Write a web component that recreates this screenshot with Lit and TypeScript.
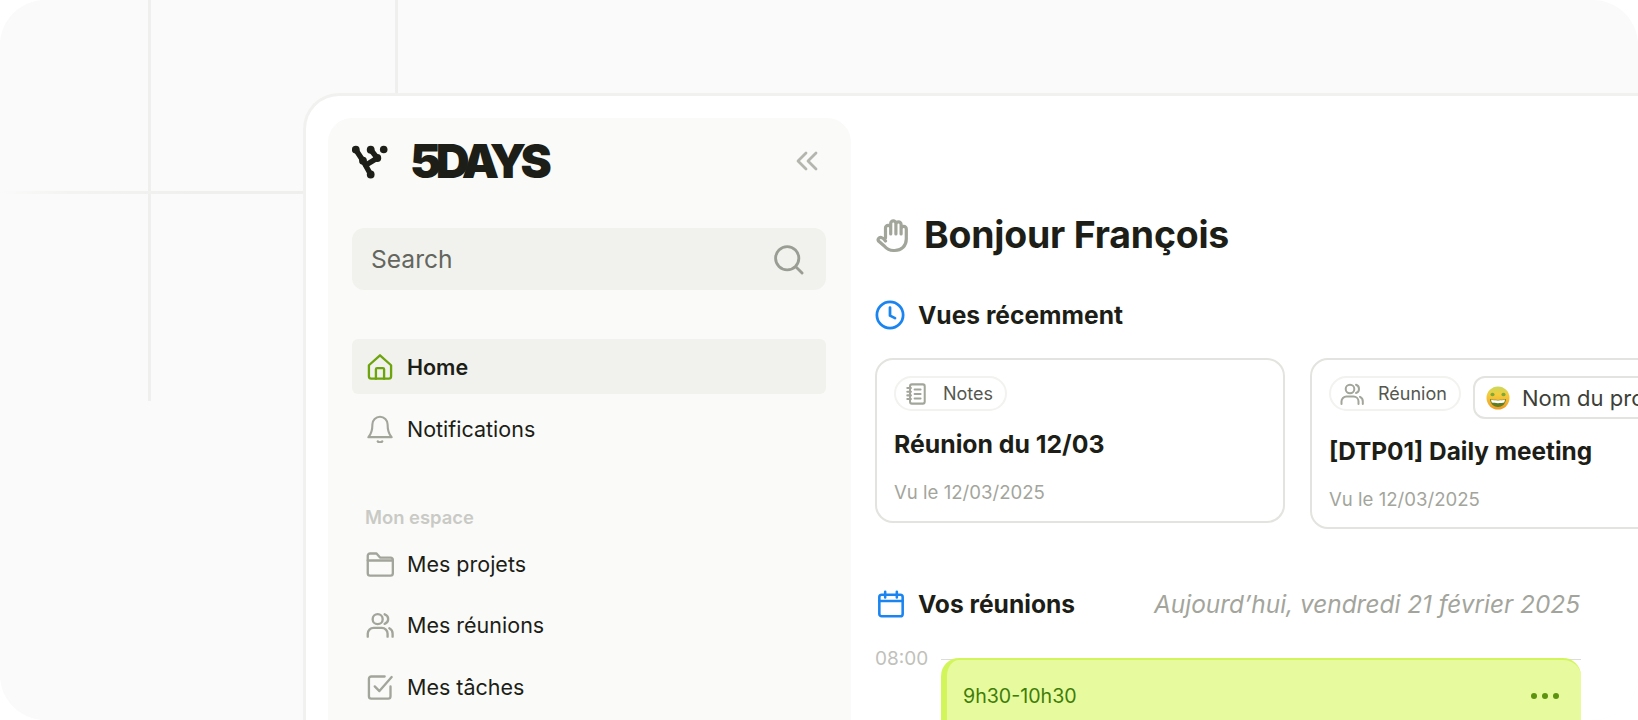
import { LitElement, html, css, svg } from 'lit';
import { customElement } from 'lit/decorators.js';

const icon = (size: number, body: unknown, vb = 24, weight = 2) => html`
  <svg width=${size} height=${size} viewBox="0 0 ${vb} ${vb}" fill="none" stroke="currentColor"
    stroke-width=${weight} stroke-linecap="round" stroke-linejoin="round" aria-hidden="true">${body}</svg>`;

const HOME = svg`<path d="M2.500 10.500 12 2l9.500 8.500V20a2 2 0 0 1-2 2h-15a2 2 0 0 1-2-2z"/><path d="M8.500 22v-8a1 1 0 0 1 1-1h5a1 1 0 0 1 1 1v8"/>`;
const BELL = svg`<path d="M12 1.500a6.500 6.500 0 0 0-6.500 6.500c0 5.500-1.500 9-3.500 11h20c-2-2-3.500-5.500-3.500-11A6.500 6.500 0 0 0 12 1.500z"/><path d="M10 22.500a2.500 2.500 0 0 0 4 0"/>`;
const FOLDER = svg`<path d="M1.500 6V5a2 2 0 0 1 2-2h5.500l3 3.500h9a2 2 0 0 1 2 2V20a2 2 0 0 1-2 2h-17.500a2 2 0 0 1-2-2z"/><path d="M1.500 9h21"/>`;
const PEOPLE = svg`<circle cx="10" cy="7" r="4.300"/><path d="M1.500 22v-2.500a5 5 0 0 1 5-5h7a5 5 0 0 1 5 5V22"/><path d="M16 2.800a4.300 4.300 0 0 1 0 8.200"/><path d="M20 14.800a5 5 0 0 1 2.800 4.700V22"/>`;
const TASK = svg`<path d="M21 11.500V20a2 2 0 0 1-2 2H4.500a2 2 0 0 1-2-2V5a2 2 0 0 1 2-2H16"/><path d="m7.500 11.500 4 4L22 3.500"/>`;
const NOTEBOOK = svg`<rect x="5.500" y="1.500" width="16" height="21" rx="2"/><path d="M2.500 5.500h4M2.500 9.500h4M2.500 13.500h4M2.500 17.500h4M10.500 7h6.500M10.500 12h6.500M10.500 17h6.500"/>`;
const HAND = svg`<path d="M9.500 20V10a2.600 2.600 0 0 1 5.200 0v6V5.500a2.600 2.600 0 0 1 5.200 0V16V6.500a2.600 2.600 0 0 1 5.200 0V16v-5a2.600 2.600 0 0 1 5.200 0v10c0 7-5 11.500-11.500 11.500h-1.500c-4 0-6.500-1.500-9-4.500L2.500 23c-1.200-1.800.5-4 2.800-3.500 1.500.3 2.700 1.500 4.200 3.500"/>`;

// beaded chains of the 5DAYS mark
const LOGO = svg`<g stroke="#1c1e17" stroke-linecap="round" fill="none" stroke-width="5.400">
    <path d="M3.800 5.700 11 16.700 18.700 30.500"/>
    <path d="M18.700 5.700 25.300 14 14 21"/>
  </g>
  <g fill="#1c1e17">
    <circle cx="3.800" cy="5.700" r="3.900"/>
    <circle cx="11" cy="16.700" r="3.900"/>
    <circle cx="18.700" cy="30.500" r="3.900"/>
    <circle cx="18.700" cy="5.700" r="3.900"/>
    <circle cx="25.300" cy="14" r="3.900"/>
    <circle cx="31.700" cy="5.500" r="3.800"/>
  </g>`;

const EMOJI = svg`<defs><linearGradient id="face" x1="0" y1="0" x2="0" y2="1"><stop offset="0" stop-color="#c9d95a"/><stop offset=".35" stop-color="#f5cc3c"/><stop offset="1" stop-color="#ee9b25"/></linearGradient></defs>
  <circle cx="12" cy="12" r="11.500" fill="url(#face)"/>
  <path d="M4.500 8c1-1.600 3-1.600 4 0 .5 1-.5 2-2 2.300-1.500-.3-2.500-1.300-2-2.300zM15.500 8c1-1.600 3-1.600 4 0 .5 1-.5 2-2 2.300-1.500-.3-2.500-1.300-2-2.300z" fill="#7aa83a"/>
  <path d="M4 13c3 1.200 13 1.200 16 0-.3 5-4 8-8 8s-7.700-3-8-8z" fill="#5f7d22"/>
  <path d="M5 13.800c3 .8 11 .8 14 0l-.7 2.800c-3 .8-9.600.8-12.600 0z" fill="#fff"/>`;

@customElement('app-root')
export class AppRoot extends LitElement {
  static override styles = css`
    :host {
      display: block;
      width: 1638px;
      height: 720px;
      background: #fff;
      font-family: Inter, 'Liberation Sans', sans-serif;
      color: #1c1e17;
    }
    .stage {
      position: relative;
      width: 1638px;
      height: 720px;
      box-sizing: border-box;
      padding: 93px 0 0 303px;
      background: #fafafa;
      border-radius: 45px;
      overflow: hidden;
    }
    .grid-line { position: absolute; background: #efefed; }
    .v1 { left: 148px; top: 0; width: 3px; height: 401px; }
    .v2 { left: 395px; top: 0; width: 3px; height: 94px; }
    .h1 {
      left: 0;
      top: 191px;
      width: 304px;
      height: 3px;
      background: linear-gradient(90deg, #fafafa 0, #f3f3f1 70px, #efefed 200px);
    }
    .window {
      position: relative;
      display: flex;
      gap: 24px;
      box-sizing: border-box;
      height: 640px;
      padding: 22px 0 0 22px;
      background: #fff;
      border: 3px solid #f1f1ef;
      border-right: 0;
      border-top-left-radius: 36px;
    }
    .side {
      flex: 0 0 523px;
      box-sizing: border-box;
      padding: 0 25px 0 24px;
      background: #fafaf8;
      border-radius: 24px 24px 0 0;
    }
    .brand { display: flex; align-items: center; height: 83px; padding-top: 1px; box-sizing: border-box; }
    .mark { flex: none; width: 38px; height: 36px; margin: 3px 20px 0 0; }
    .wordmark {
      font-size: 47px;
      line-height: 1;
      font-weight: 900;
      letter-spacing: -5.600px;
      color: #1c1e17;
    }
    .collapse { display: flex; margin: 1px 7px 0 auto; color: #b4b6ae; }
    .search {
      display: flex;
      align-items: center;
      justify-content: space-between;
      height: 62px;
      margin-top: 27px;
      padding: 0 22px 0 19px;
      border-radius: 12px;
      background: #f1f2ee;
      font-size: 24.600px;
      color: #64665e;
    }
    .search svg { color: #9a9d93; }
    nav { display: flex; flex-direction: column; }
    .primary { margin-top: 49px; gap: 7px; }
    .item {
      display: flex;
      align-items: center;
      gap: 13px;
      height: 55px;
      padding-left: 14px;
      border-radius: 6px;
      font-size: 21.500px;
      color: #1c1e17;
    }
    .item svg { color: #a2a59a; flex: none; }
    .item.active { background: #f1f2ee; font-weight: 600; }
    .item.active svg { color: #6da40c; }
    .group {
      margin: 49px 0 7px 13px;
      font-size: 18.400px;
      line-height: 24px;
      font-weight: 600;
      color: #c9cac5;
    }
    .spaced { gap: 6.500px; }
    main { flex: 1; min-width: 0; overflow: hidden; padding-top: 95px; }
    .hello { display: flex; align-items: center; gap: 13px; height: 44px; }
    .hello svg { color: #a2a59a; margin-left: 1px; }
    h1 { margin: 0; font-size: 37.400px; line-height: 44px; font-weight: 700; letter-spacing: -.2px; }
    .section { display: flex; align-items: center; gap: 13px; font-size: 24.600px; font-weight: 700; }
    .section svg { color: #1a85f0; flex: none; }
    .recent-head { margin-top: 43px; height: 30px; }
    .cards { display: flex; align-items: flex-start; gap: 25px; margin-top: 28px; width: 900px; }
    .card {
      box-sizing: border-box;
      flex: none;
      width: 410px;
      height: 165px;
      padding: 16px 17px 0;
      border: 2px solid #e3e4df;
      border-radius: 18px;
      background: #fff;
    }
    .card.wide { height: 171px; width: 480px; }
    .tags { display: flex; align-items: flex-start; gap: 12px; }
    .pill {
      display: flex;
      align-items: center;
      gap: 16px;
      height: 35px;
      padding: 0 12px 0 9px;
      box-sizing: border-box;
      border: 2px solid #f2f2ef;
      border-radius: 18px;
      font-size: 18px;
      color: #55574f;
    }
    .pill.tight { gap: 14px; }
    .pill svg { color: #a2a59a; flex: none; }
    .project {
      display: flex;
      align-items: center;
      gap: 12px;
      height: 43px;
      padding: 0 12px 0 11px;
      box-sizing: border-box;
      border: 2px solid #e3e4df;
      border-radius: 12px;
      font-size: 22px;
      color: #3d3f38;
      white-space: nowrap;
    }
    .title { margin-top: 18px; font-size: 24.800px; line-height: 30px; font-weight: 700; }
    .wide .title { margin-top: 17px; font-size: 24.400px; }
    .seen { margin-top: 21px; font-size: 18.600px; line-height: 24px; color: #a3a59c; }
    .meet-head { width: 706px; margin-top: 60px; height: 30px; }
    .meet-head svg { margin-left: 2px; }
    .meet-head .date {
      margin-left: auto;
      padding-right: 1px;
      font-size: 24.400px;
      font-style: italic;
      font-weight: 400;
      color: #a3a59c;
    }
    .timeline { display: flex; gap: 14px; margin-top: 40px; width: 706px; }
    .hour { font-size: 19px; line-height: 24px; color: #c0c1bb; margin-top: -12px; width: 52px; flex: none; }
    .slot { flex: none; width: 640px; border-top: 1px solid #dcdcd8; }
    .meeting {
      display: flex;
      align-items: center;
      justify-content: space-between;
      box-sizing: border-box;
      height: 100px;
      margin-top: -2px;
      padding: 0 22px 27px 16px;
      background: #e7fa9d;
      border-top: 2px solid #d3f55c;
      border-left: 6px solid #d3f55c;
      border-radius: 18px 18px 0 0;
      font-size: 19.600px;
      color: #3f7d0a;
    }
    .dots { display: flex; gap: 5px; }
    .dots i { width: 6px; height: 6px; border-radius: 50%; background: #5c930f; }
  `;

  override render() {
    return html`
      <div class="stage">
        <div class="grid-line v1"></div>
        <div class="grid-line v2"></div>
        <div class="grid-line h1"></div>
        <div class="window">
          <aside class="side">
            <div class="brand">
              <svg class="mark" viewBox="0 0 38 36" aria-hidden="true">${LOGO}</svg>
              <span class="wordmark">5DAYS</span>
              <span class="collapse">${icon(24, svg`<path d="m11 4-8 8 8 8M21 4l-8 8 8 8"/>`, 24, 2.800)}</span>
            </div>
            <div class="search">
              <span>Search</span>
              ${icon(31, svg`<circle cx="11" cy="11" r="9"/><path d="m18 18 4.500 4.500"/>`, 24, 2.200)}
            </div>
            <nav class="primary">
              <div class="item active">${icon(28, HOME)}Home</div>
              <div class="item">${icon(28, BELL, 24, 1.800)}Notifications</div>
            </nav>
            <div class="group">Mon espace</div>
            <nav class="spaced">
              <div class="item">${icon(28, FOLDER)}Mes projets</div>
              <div class="item">${icon(28, PEOPLE)}Mes réunions</div>
              <div class="item">${icon(28, TASK)}Mes tâches</div>
            </nav>
          </aside>
          <main>
            <div class="hello">
              ${icon(35, HAND, 35, 3.200)}
              <h1>Bonjour François</h1>
            </div>
            <div class="section recent-head">
              ${icon(30, svg`<circle cx="12" cy="12" r="10.500"/><path d="M12 6v6.500l4 2"/>`, 24, 2.200)}
              Vues récemment
            </div>
            <div class="cards">
              <article class="card">
                <div class="tags"><span class="pill">${icon(22, NOTEBOOK, 24, 2.200)}Notes</span></div>
                <div class="title">Réunion du 12/03</div>
                <div class="seen">Vu le 12/03/2025</div>
              </article>
              <article class="card wide">
                <div class="tags">
                  <span class="pill tight">${icon(24, PEOPLE)}Réunion</span>
                  <span class="project">
                    <svg width="24" height="24" viewBox="0 0 24 24" aria-hidden="true">${EMOJI}</svg>
                    Nom du projet
                  </span>
                </div>
                <div class="title">[DTP01] Daily meeting</div>
                <div class="seen">Vu le 12/03/2025</div>
              </article>
            </div>
            <div class="section meet-head">
              ${icon(28, svg`<rect x="2" y="4" width="20" height="18.500" rx="2"/><path d="M2 9.500h20M7 1.500v5M17 1.500v5"/>`, 24, 2.200)}
              Vos réunions
              <span class="date">Aujourd’hui, vendredi 21 février 2025</span>
            </div>
            <div class="timeline">
              <div class="hour">08:00</div>
              <div class="slot">
                <div class="meeting">
                  <span>9h30-10h30</span>
                  <span class="dots"><i></i><i></i><i></i></span>
                </div>
              </div>
            </div>
          </main>
        </div>
      </div>
    `;
  }
}
